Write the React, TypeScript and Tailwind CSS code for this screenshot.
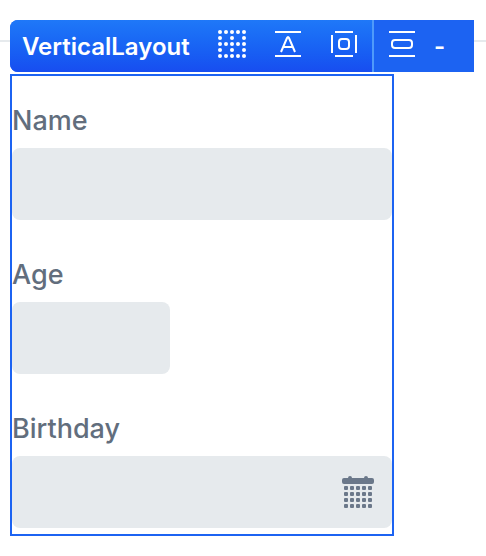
import type { ReactNode } from "react";

const columns = [0, 1, 2, 3, 4];

function GridIcon() {
  return (
    <svg width="28" height="28" viewBox="0 0 28 28" fill="currentColor" aria-hidden="true">
      {columns.map((row) =>
        columns
          .filter((col) => row % 2 === 0 || col % 2 === 0)
          .map((col) => <circle key={`${row}-${col}`} cx={2 + col * 6} cy={2 + row * 6} r="2" />)
      )}
    </svg>
  );
}

function StrokeIcon({ children }: { children: ReactNode }) {
  return (
    <svg width="28" height="28" viewBox="0 0 28 28" fill="none" stroke="currentColor" strokeWidth="2" aria-hidden="true">
      {children}
    </svg>
  );
}

function CalendarIcon() {
  return (
    <svg width="32" height="32" viewBox="0 0 32 32" fill="currentColor" aria-hidden="true">
      <path d="M2 2h4a2 2 0 0 1 4 0h12a2 2 0 0 1 4 0h4a2 2 0 0 1 2 2v2a2 2 0 0 1-2 2H2a2 2 0 0 1-2-2V4a2 2 0 0 1 2-2z" />
      {[10, 16, 22, 28].map((y) =>
        columns.map((col) => <rect key={`${y}-${col}`} x={2 + col * 6} y={y} width="4" height="4" rx="1" />)
      )}
    </svg>
  );
}

function ToolButton({ label, children }: { label: string; children: ReactNode }) {
  return (
    <button type="button" aria-label={label} className="flex h-13 w-14 shrink-0 items-center justify-center pb-1">
      {children}
    </button>
  );
}

function Field({ id, label, width, children }: { id: string; label: string; width: string; children?: ReactNode }) {
  return (
    <div className="flex flex-col gap-1.5">
      <label htmlFor={id} className="text-[27px] leading-[42px] font-medium text-[#626e7d]">
        {label}
      </label>
      <div className={`flex h-18 items-center rounded-lg bg-[#e6eaed] ${width}`}>
        <input id={id} type="text" className="h-full min-w-0 flex-1 rounded-lg bg-transparent px-4 text-2xl outline-none" />
        {children}
      </div>
    </div>
  );
}

export default function App() {
  return (
    <main className="bg-white pt-5 pb-5 font-['Inter',sans-serif]">
      <header className="flex items-start">
        <div className="mt-5 h-0.5 w-2.5 bg-[#e6eaed]" />
        <div className="flex h-13 flex-1 overflow-hidden rounded-l-lg bg-[#1c63f2] text-white">
          <div className="flex items-center border-r-2 border-[#4f9afa] bg-linear-to-b from-[#1f78f8] to-[#184df0]">
            <span className="w-[194px] pt-0.5 pl-3 text-2xl font-semibold">VerticalLayout</span>
            <ToolButton label="Show grid">
              <GridIcon />
            </ToolButton>
            <ToolButton label="Text spacing">
              <StrokeIcon>
                <path d="M1 2h26M1 26h26M7 22l6-14q1-2 2 0l6 14M9 17h10" />
              </StrokeIcon>
            </ToolButton>
            <ToolButton label="Padding">
              <StrokeIcon>
                <path d="M5 2h18M5 26h18M2 5v18M26 5v18" />
                <rect x="9" y="9" width="10" height="10" rx="3" />
              </StrokeIcon>
            </ToolButton>
          </div>
          <ToolButton label="Vertical spacing">
            <StrokeIcon>
              <path d="M1 2h26M1 26h26" />
              <rect x="4" y="10" width="20" height="8" rx="3" />
            </StrokeIcon>
          </ToolButton>
          <button type="button" aria-label="Spacing value" className="pt-0.5 pl-1 text-2xl font-semibold">
            -
          </button>
        </div>
        <div className="mt-5 h-0.5 w-3 bg-[#e6eaed]" />
      </header>
      <form className="mt-0.5 mr-23 ml-2.5 flex flex-col gap-[34px] border-2 border-[#1c63f2] pt-6 pb-1.5">
        <Field id="name" label="Name" width="w-full" />
        <Field id="age" label="Age" width="w-[158px]" />
        <Field id="birthday" label="Birthday" width="w-full">
          <button type="button" aria-label="Open calendar" className="mr-[18px] text-[#6b788a]">
            <CalendarIcon />
          </button>
        </Field>
      </form>
    </main>
  );
}
